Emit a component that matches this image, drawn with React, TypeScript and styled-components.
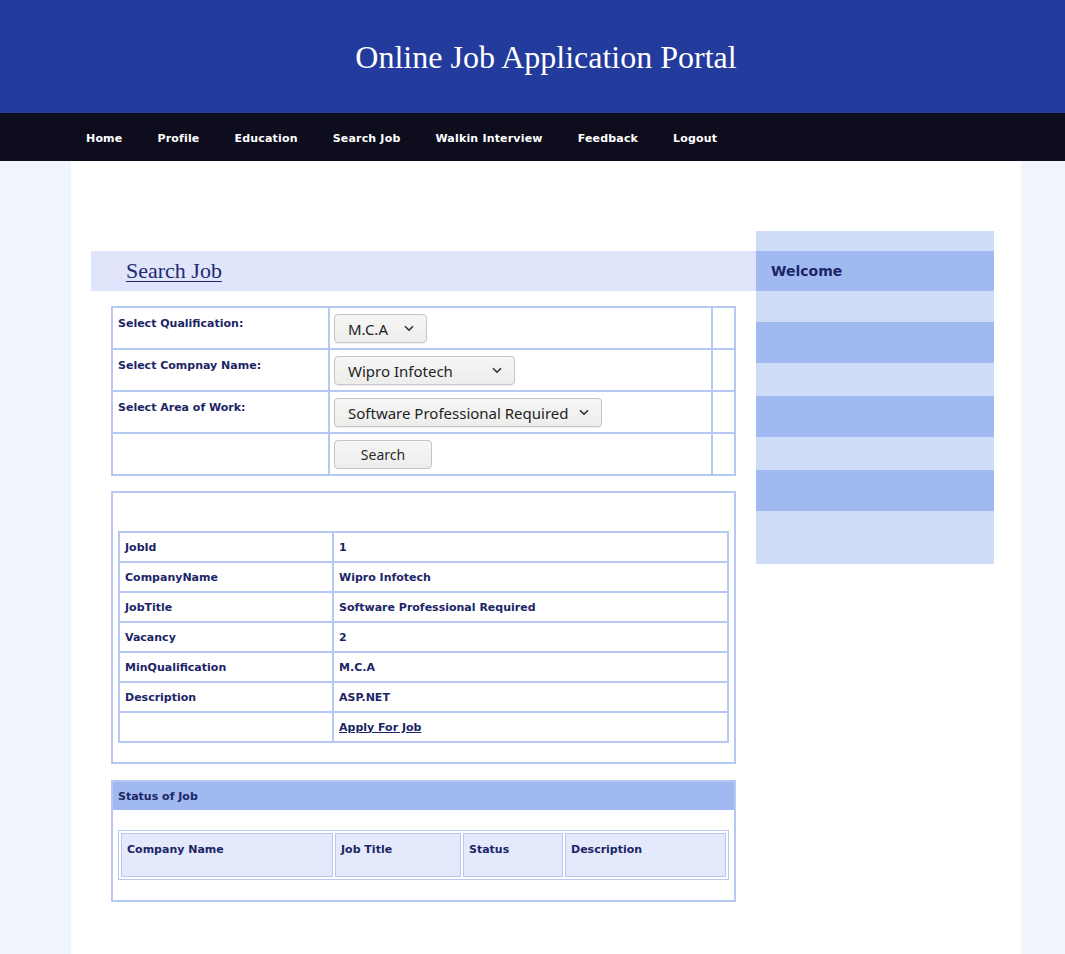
import React from "react";
import styled, { createGlobalStyle } from "styled-components";

const GlobalStyle = createGlobalStyle`
  html, body { margin: 0; padding: 0; }
  body {
    background: #f0f4fd;
    font-family: "DejaVu Sans", Verdana, sans-serif;
    color: #1c2566;
  }
`;

const Header = styled.header`
  background: #233b9c;
`;

const HeaderInner = styled.div`
  width: 950px;
  margin-left: 71px;
  height: 113px;
  display: flex;
  align-items: center;
  justify-content: center;
`;

const Title = styled.h1`
  margin: 0;
  font-family: "Liberation Serif", "Times New Roman", serif;
  font-weight: normal;
  font-size: 32px;
  color: #ffffff;
  padding-top: 1px;
`;

const Nav = styled.nav`
  background: #0d0d1d;
`;

const NavInner = styled.ul`
  width: 950px;
  margin: 0 0 0 71px;
  box-sizing: border-box;
  height: 48px;
  padding: 0 0 1px 15px;
  list-style: none;
  display: flex;
  align-items: center;
  gap: 35px;
`;

const NavLink = styled.a`
  color: #ffffff;
  font-family: "DejaVu Sans", Verdana, sans-serif;
  font-weight: bold;
  font-size: 11px;
  letter-spacing: 0.18px;
  text-decoration: none;
`;

const Page = styled.div`
  width: 950px;
  margin-left: 71px;
  box-sizing: border-box;
  background: #ffffff;
  min-height: 793px;
  padding: 70px 27px 40px 20px;
  display: flex;
  align-items: flex-start;
`;

const Main = styled.main`
  width: 665px;
  margin-top: 20px;
`;

const HeadingBand = styled.div`
  height: 40px;
  background: #e0e5fc;
  padding-left: 35px;
  display: flex;
  align-items: center;
`;

const Heading = styled.a`
  font-family: "Liberation Serif", "Times New Roman", serif;
  font-size: 22px;
  color: #1f2a6e;
  text-decoration: underline;
  text-underline-offset: 3px;
  text-decoration-thickness: 1px;
`;

const Content = styled.div`
  padding: 0 20px;
`;

const FormTable = styled.table`
  margin-top: 15px;
  width: 625px;
  border-collapse: collapse;
  border: 2px solid #b7c8f4;
`;

const FormCell = styled.td<{ $w?: number; $label?: boolean }>`
  border: 2px solid #b7c8f4;
  vertical-align: top;
  height: 41px;
  box-sizing: border-box;
  width: ${(p) => (p.$w ? `${p.$w}px` : "auto")};
  padding: ${(p) => (p.$label ? "9px 5px 5px 5px" : "6px 4px 5px")};
  font-weight: bold;
  font-size: 11px;
  color: #1c2566;
`;

const SelectWrap = styled.div<{ $w: number }>`
  position: relative;
  width: ${(p) => p.$w}px;
  height: 29px;
`;

const Select = styled.select`
  appearance: none;
  -webkit-appearance: none;
  width: 100%;
  height: 100%;
  box-sizing: border-box;
  border: 1px solid #c4c4c2;
  border-radius: 4px;
  background: linear-gradient(#f6f6f5, #ededec);
  font-family: "Noto Sans", "Open Sans", sans-serif;
  font-size: 15px;
  color: #1e1e1e;
  padding: 0 0 0 13px;
  box-shadow: 0 1px 0 rgba(0, 0, 0, 0.05);
`;

const Chevron = styled.svg`
  position: absolute;
  right: 13px;
  top: 11px;
  pointer-events: none;
`;

const Button = styled.button`
  width: 98px;
  height: 29px;
  border: 1px solid #c4c4c2;
  border-radius: 4px;
  background: linear-gradient(#f6f6f5, #ededec);
  font-family: "Noto Sans", "Open Sans", sans-serif;
  font-size: 14px;
  color: #2a2a2a;
  padding: 0;
`;

const Box = styled.div<{ $mt: number }>`
  margin-top: ${(p) => p.$mt}px;
  width: 625px;
  box-sizing: border-box;
  border: 2px solid #b7c8f4;
`;

const BoxBody = styled.div<{ $pt: number; $pb: number }>`
  padding: ${(p) => `${p.$pt}px 5px ${p.$pb}px`};
`;

const DetailTable = styled.table`
  width: 611px;
  border-collapse: collapse;
  border: 2px solid #b7c8f4;
`;

const DetailCell = styled.td<{ $w?: number }>`
  border: 2px solid #b7c8f4;
  height: 30px;
  box-sizing: border-box;
  padding: 0 5px;
  width: ${(p) => (p.$w ? `${p.$w}px` : "auto")};
  font-weight: bold;
  font-size: 11px;
  color: #1c2566;
  vertical-align: middle;
`;

const ApplyLink = styled.a`
  color: #1c2566;
  text-decoration: underline;
`;

const BoxHeader = styled.div`
  height: 28px;
  background: #a0b9f0;
  display: flex;
  align-items: center;
  padding-left: 5px;
  font-weight: bold;
  font-size: 11px;
  color: #1c2566;
`;

const StatusTable = styled.table`
  width: 611px;
  border: 1px solid #b7c8f4;
  border-spacing: 2px;
`;

const StatusHead = styled.th<{ $w: number }>`
  width: ${(p) => p.$w}px;
  height: 44px;
  box-sizing: border-box;
  border: 1px solid #b7c8f4;
  background: #e4eafb;
  text-align: left;
  vertical-align: top;
  padding: 9px 5px 0;
  font-weight: bold;
  font-size: 11px;
  color: #1c2566;
`;

const Sidebar = styled.aside`
  width: 238px;
  background: #cedcf7;
  padding: 20px 0 53px;
`;

const Welcome = styled.div`
  height: 40px;
  background: #a0b9f0;
  padding-left: 15px;
  display: flex;
  align-items: center;
  font-weight: bold;
  font-size: 14px;
  color: #1c2566;
`;

const SideMenu = styled.ul`
  list-style: none;
  margin: 0;
  padding: 31px 0 0;
  display: flex;
  flex-direction: column;
  gap: 33px;
`;

const SideItem = styled.li`
  height: 41px;
  background: #a0b9f0;
`;

const ChevronIcon = () => (
  <Chevron width="10" height="7" viewBox="0 0 10 7">
    <path d="M1 1.2 L5 5.2 L9 1.2" fill="none" stroke="#2e2e2e" strokeWidth="1.6" />
  </Chevron>
);

const Dropdown = ({ w, value }: { w: number; value: string }) => (
  <SelectWrap $w={w}>
    <Select defaultValue={value}>
      <option value={value}>{value}</option>
    </Select>
    <ChevronIcon />
  </SelectWrap>
);

const navItems = ["Home", "Profile", "Education", "Search Job", "Walkin Interview", "Feedback", "Logout"];

const details: [string, string][] = [
  ["JobId", "1"],
  ["CompanyName", "Wipro Infotech"],
  ["JobTitle", "Software Professional Required"],
  ["Vacancy", "2"],
  ["MinQualification", "M.C.A"],
  ["Description", "ASP.NET"],
];

export default function App() {
  return (
    <>
      <GlobalStyle />
      <Header>
        <HeaderInner>
          <Title>Online Job Application Portal</Title>
        </HeaderInner>
      </Header>
      <Nav>
        <NavInner>
          {navItems.map((n) => (
            <li key={n}>
              <NavLink href="#">{n}</NavLink>
            </li>
          ))}
        </NavInner>
      </Nav>
      <Page>
        <Main>
          <HeadingBand>
            <Heading href="#">Search Job</Heading>
          </HeadingBand>
          <Content>
            <FormTable>
              <tbody>
                <tr>
                  <FormCell $w={217} $label>Select Qualification:</FormCell>
                  <FormCell><Dropdown w={93} value="M.C.A" /></FormCell>
                  <FormCell $w={23} />
                </tr>
                <tr>
                  <FormCell $label>Select Compnay Name:</FormCell>
                  <FormCell><Dropdown w={181} value="Wipro Infotech" /></FormCell>
                  <FormCell />
                </tr>
                <tr>
                  <FormCell $label>Select Area of Work:</FormCell>
                  <FormCell><Dropdown w={268} value="Software Professional Required" /></FormCell>
                  <FormCell />
                </tr>
                <tr>
                  <FormCell $label />
                  <FormCell><Button>Search</Button></FormCell>
                  <FormCell />
                </tr>
              </tbody>
            </FormTable>

            <Box $mt={15}>
              <BoxBody $pt={38} $pb={19}>
                <DetailTable>
                  <tbody>
                    {details.map(([k, v], i) => (
                      <tr key={k}>
                        <DetailCell $w={i === 0 ? 214 : undefined}>{k}</DetailCell>
                        <DetailCell>{v}</DetailCell>
                      </tr>
                    ))}
                    <tr>
                      <DetailCell />
                      <DetailCell>
                        <ApplyLink href="#">Apply For Job</ApplyLink>
                      </DetailCell>
                    </tr>
                  </tbody>
                </DetailTable>
              </BoxBody>
            </Box>

            <Box $mt={16}>
              <BoxHeader>Status of Job</BoxHeader>
              <BoxBody $pt={20} $pb={20}>
                <StatusTable>
                  <thead>
                    <tr>
                      <StatusHead $w={212}>Company Name</StatusHead>
                      <StatusHead $w={126}>Job Title</StatusHead>
                      <StatusHead $w={100}>Status</StatusHead>
                      <StatusHead $w={161}>Description</StatusHead>
                    </tr>
                  </thead>
                </StatusTable>
              </BoxBody>
            </Box>
          </Content>
        </Main>
        <Sidebar>
          <Welcome>Welcome</Welcome>
          <SideMenu>
            <SideItem />
            <SideItem />
            <SideItem />
          </SideMenu>
        </Sidebar>
      </Page>
    </>
  );
}
